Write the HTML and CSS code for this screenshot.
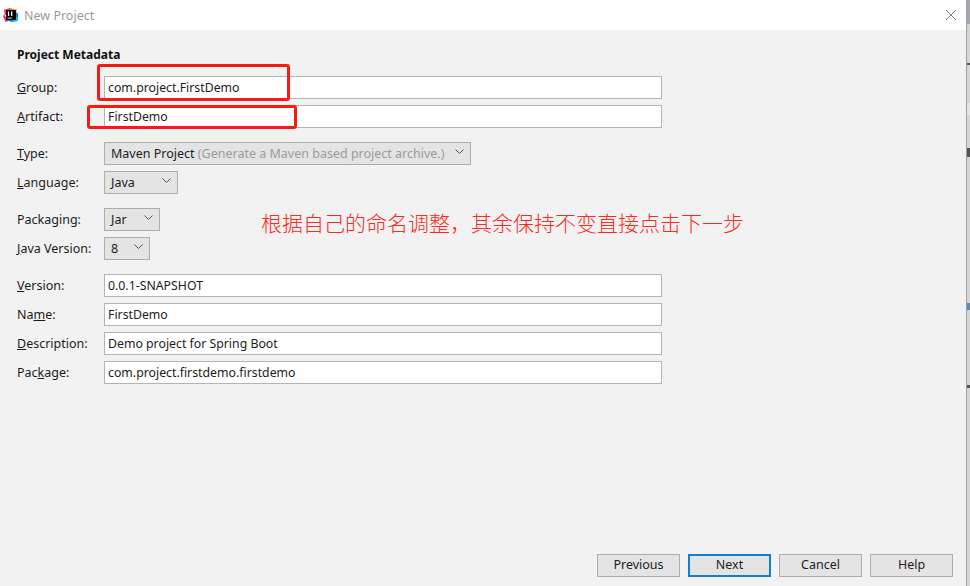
FILE: index.html
```html
<!DOCTYPE html>
<html lang="en">
<head>
<meta charset="utf-8">
<title>New Project</title>
<link rel="stylesheet" href="styles.css">
</head>
<body>
<div class="screen">
  <div class="dialog">
    <header class="titlebar">
      <svg class="logo" width="16" height="16" viewBox="0 0 18 18">
        <path d="M1 3 L8 1 L9 8 L2 9 Z" fill="#f0337d"/>
        <path d="M8 1 L16 3 L12 9 L7 6 Z" fill="#f58a2c"/>
        <path d="M1 8 L6 16 L3 17 L0 11 Z" fill="#e9377c"/>
        <path d="M12 5 L17 7 L17 15 L10 17 L4 15 L8 9 Z" fill="#1f7fe0"/>
        <path d="M14 11 L17 12 L16 16 L11 17 Z" fill="#21c4d8"/>
        <rect x="3.500" y="3.500" width="11" height="11" fill="#000"/>
        <rect x="5" y="12" width="5" height="1" fill="#fff"/>
        <rect x="5.500" y="5" width="1.500" height="5" fill="#fff"/>
        <rect x="9" y="5" width="1.500" height="5" fill="#fff"/>
      </svg>
      <span class="title">New Project</span>
      <svg class="close" width="12" height="12" viewBox="0 0 12 12">
        <path d="M1 1 L11 11 M11 1 L1 11" stroke="#7f7f7f" stroke-width="1" fill="none"/>
      </svg>
    </header>
    <main class="content">
      <h1 class="heading">Project Metadata</h1>
      <div class="groups">
        <div class="group">
          <div class="row"><label class="label"><u>G</u>roup:</label><div class="input">com.project.FirstDemo</div></div>
          <div class="row"><label class="label"><u>A</u>rtifact:</label><div class="input">FirstDemo</div></div>
        </div>
        <div class="group">
          <div class="row"><label class="label"><u>T</u>ype:</label>
            <div class="select select-type"><span>Maven Project <span class="hint">(Generate a Maven based project archive.)</span></span>
              <svg class="chev" width="9" height="6" viewBox="0 0 9 6"><path d="M0.500 0.500 L4.500 4.500 L8.500 0.500" stroke="#555" fill="none"/></svg></div></div>
          <div class="row"><label class="label"><u>L</u>anguage:</label>
            <div class="select select-lang"><span>Java</span>
              <svg class="chev" width="9" height="6" viewBox="0 0 9 6"><path d="M0.500 0.500 L4.500 4.500 L8.500 0.500" stroke="#555" fill="none"/></svg></div></div>
        </div>
        <div class="group">
          <div class="row"><label class="label">Packa<u>g</u>ing:</label>
            <div class="select select-jar"><span>Jar</span>
              <svg class="chev" width="9" height="6" viewBox="0 0 9 6"><path d="M0.500 0.500 L4.500 4.500 L8.500 0.500" stroke="#555" fill="none"/></svg></div></div>
          <div class="row"><label class="label"><u>J</u>ava Version:</label>
            <div class="select select-ver"><span>8</span>
              <svg class="chev" width="9" height="6" viewBox="0 0 9 6"><path d="M0.500 0.500 L4.500 4.500 L8.500 0.500" stroke="#555" fill="none"/></svg></div></div>
        </div>
        <div class="group">
          <div class="row"><label class="label"><u>V</u>ersion:</label><div class="input">0.0.1-SNAPSHOT</div></div>
          <div class="row"><label class="label">Na<u>m</u>e:</label><div class="input">FirstDemo</div></div>
          <div class="row"><label class="label"><u>D</u>escription:</label><div class="input">Demo project for Spring Boot</div></div>
          <div class="row"><label class="label">Pac<u>k</u>age:</label><div class="input">com.project.firstdemo.firstdemo</div></div>
        </div>
      </div>
      <footer class="buttons">
        <div class="btn">Previous</div>
        <div class="btn btn-default">Next</div>
        <div class="btn">Cancel</div>
        <div class="btn">Help</div>
      </footer>
    </main>
  </div>
  <div class="behind">
    <i class="speck speck-top s0"></i>
    <i class="speck speck-dark s1"></i>
    <i class="speck speck-band s5"></i>
    <i class="speck speck-dark s2"></i>
    <i class="speck speck-blue s3"></i>
    <i class="speck speck-dark s4"></i>
  </div>
  <div class="mark mark-group"></div>
  <div class="mark mark-artifact"></div>
  <div class="note">根据自己的命名调整，其余保持不变直接点击下一步</div>
</div>
</body>
</html>
```
FILE: styles.css
```css
* { box-sizing: border-box; }
html, body { margin: 0; padding: 0; }
body {
  width: 970px;
  height: 586px;
  overflow: hidden;
  font-family: "Noto Sans", "Open Sans", sans-serif;
  font-size: 12.500px;
  color: #1c1c1c;
}
.screen { position: relative; display: flex; width: 970px; height: 586px; }
.dialog {
  width: 967px;
  display: flex;
  flex-direction: column;
  border-right: 1px solid #9e9e9e;
}
.titlebar {
  height: 30px;
  background: #fff;
  display: flex;
  align-items: center;
  padding: 0 9px 0 3px;
}
.logo { flex: none; }
.title { margin-left: 5px; color: #9a9a9a; font-size: 12.500px; flex: 1; }
.close { flex: none; }
.content {
  flex: 1;
  background: #f2f2f2;
  padding: 16px 13px 9px 17px;
  display: flex;
  flex-direction: column;
}
.heading {
  margin: 0 0 13px;
  font-size: 12px;
  font-weight: 700;
  line-height: 17px;
  color: #111;
}
.groups { display: flex; flex-direction: column; gap: 14px; flex: 1; }
.group { display: flex; flex-direction: column; gap: 6px; }
.row { display: flex; align-items: center; height: 23px; }
.label { width: 87px; flex: none; }
.input {
  width: 558px;
  height: 23px;
  background: #fff;
  border: 1px solid #b4b4b4;
  padding: 0 3px;
  font-size: 12.300px;
  line-height: 21px;
}
.select {
  height: 23px;
  background: #e4e4e4;
  border: 1px solid #adadad;
  display: flex;
  align-items: center;
  justify-content: space-between;
  padding: 0 6px 0 6px;
}
.select-type { width: 367px; }
.select-lang { width: 74px; }
.select-jar { width: 56px; }
.select-ver { width: 46px; }
.hint { color: #9b9b9b; }
.chev { flex: none; margin-bottom: 3px; }
.buttons { display: flex; justify-content: flex-end; gap: 8px; }
.btn {
  width: 83px;
  height: 23px;
  background: #e4e4e4;
  border: 1px solid #adadad;
  text-align: center;
  line-height: 20px;
}
.btn-default { border: 2px solid #0f7fd8; line-height: 18px; }
.behind { position: relative; flex: 1; background: #d6d6d6; }
.speck { position: absolute; left: 0; width: 3px; }
.speck-top { background: #a3a8b0; }
.speck-dark { background: #555; }
.speck-band { background: #e4e4e4; }
.speck-blue { background: #4f8fc0; }
.s0 { top: 0; height: 24px; }
.s1 { top: 63px; height: 2px; }
.s5 { top: 103px; height: 12px; }
.s2 { top: 148px; height: 9px; }
.s3 { top: 303px; height: 7px; }
.s4 { top: 385px; height: 3px; }
.mark {
  position: absolute;
  border: 3px solid #fb1a12;
  border-radius: 3px;
}
.mark-group { left: 97px; top: 64px; width: 193px; height: 37px; }
.mark-artifact { left: 87px; top: 105px; width: 210px; height: 24px; }
.note {
  position: absolute;
  left: 261px;
  top: 207px;
  font-family: "Noto Sans CJK SC", sans-serif;
  font-size: 21px;
  font-weight: 300;
  line-height: 30px;
  color: #fb2a22;
  white-space: nowrap;
}
```
